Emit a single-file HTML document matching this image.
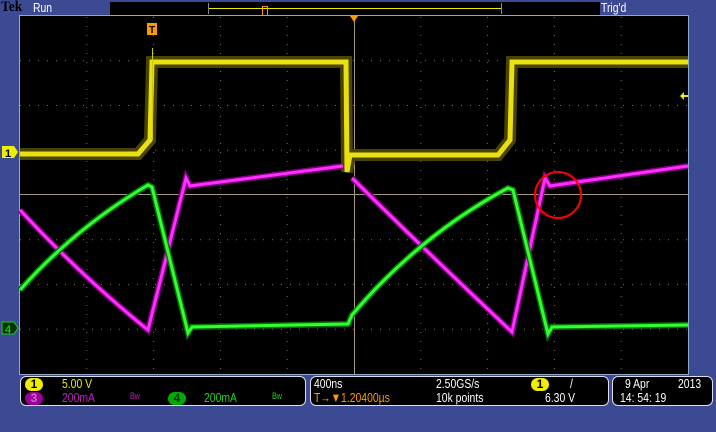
<!DOCTYPE html>
<html><head><meta charset="utf-8"><style>
body{margin:0;width:716px;height:432px;background:#3c4993;overflow:hidden;position:relative;font-family:"Liberation Sans",sans-serif}
.t{position:absolute;color:#fff;font-size:13px;white-space:nowrap;transform-origin:0 0;transform:scaleX(.8)}
.panel{position:absolute;background:#000;border:1px solid #dde;border-radius:6px}
.badge{position:absolute;width:18px;height:13px;border-radius:7px;font-size:12px;text-align:center;line-height:13px;font-weight:bold}
</style></head><body>
<div class="t" style="left:1px;top:-1px;font-family:'Liberation Serif',serif;font-weight:bold;font-size:15px;color:#000;transform:scaleX(.9)">Tek</div>
<div class="t" style="left:33px;top:0px">Run</div>
<div style="position:absolute;left:110px;top:2px;width:490px;height:13px;background:#000"></div>
<div style="position:absolute;left:208px;top:3px;width:292px;height:11px;border-left:1px solid #888;border-right:1px solid #888"></div>
<div style="position:absolute;left:209px;top:8px;width:292px;height:1px;background:#ee0"></div>
<div style="position:absolute;left:262px;top:6px;width:4px;height:8px;border:1px solid #f90"></div>
<div class="t" style="left:601px;top:0px">Trig'd</div>
<svg style="position:absolute;left:0;top:0" width="716" height="432">
<rect x="19.5" y="15.5" width="669" height="359" fill="#000" stroke="#8ac" stroke-width="1"/>
<g stroke="#7b7358" stroke-width="1" stroke-dasharray="1 8">
<line x1="86.8" y1="17" x2="86.8" y2="374"/><line x1="153.6" y1="17" x2="153.6" y2="374"/><line x1="220.4" y1="17" x2="220.4" y2="374"/><line x1="287.2" y1="17" x2="287.2" y2="374"/><line x1="420.8" y1="17" x2="420.8" y2="374"/><line x1="487.6" y1="17" x2="487.6" y2="374"/><line x1="554.4" y1="17" x2="554.4" y2="374"/><line x1="621.2" y1="17" x2="621.2" y2="374"/>
<line x1="20" y1="60.75" x2="688" y2="60.75"/><line x1="20" y1="105.5" x2="688" y2="105.5"/><line x1="20" y1="150.25" x2="688" y2="150.25"/><line x1="20" y1="239.75" x2="688" y2="239.75"/><line x1="20" y1="284.5" x2="688" y2="284.5"/><line x1="20" y1="329.25" x2="688" y2="329.25"/>
</g>
<line x1="354.5" y1="16" x2="354.5" y2="374" stroke="#a89878"/>
<line x1="20" y1="194.5" x2="688" y2="194.5" stroke="#a89878"/>
<!-- yellow -->
<g fill="none" stroke-linejoin="miter">
<path d="M20 154 L138 154 L150 140 L152 62 L346 62 L347 172 L350 155 L498 155 L510 140 L512 62 L688 62" stroke="#4a4400" stroke-width="12"/>
<path d="M20 154 L138 154 L150 140 L152 62 L346 62 L347 172 L350 155 L498 155 L510 140 L512 62 L688 62" stroke="#e8e010" stroke-width="5"/>
<line x1="152.5" y1="48" x2="152.5" y2="140" stroke="#cc0" stroke-width="1"/>
</g>
<!-- magenta -->
<path d="M20 210 Q80 275 148 330 L186 178 L190 186 L343 166 M352 178 Q430 255 512 332 L545 178 L550 186 L688 166" fill="none" stroke="#800080" stroke-width="6"/>
<path d="M20 210 Q80 275 148 330 L186 178 L190 186 L343 166 M352 178 Q430 255 512 332 L545 178 L550 186 L688 166" fill="none" stroke="#ff30ff" stroke-width="3"/>
<!-- green -->
<path d="M20 290 Q75 228 148 185 L152 187 L188 333 L192 327 L348 324 L352 315 Q420 235 508 188 L513 190 L548 334 L552 327 L688 325" fill="none" stroke="#087008" stroke-width="6"/>
<path d="M20 290 Q75 228 148 185 L152 187 L188 333 L192 327 L348 324 L352 315 Q420 235 508 188 L513 190 L548 334 L552 327 L688 325" fill="none" stroke="#30ff30" stroke-width="3"/>
<circle cx="558" cy="195" r="23" fill="none" stroke="#f00" stroke-width="2"/>
<path d="M350 16 L358 16 L354 22 Z" fill="#f90"/>
<rect x="147" y="23" width="10" height="12" fill="#f90"/><text x="149" y="33" font-size="10" font-weight="bold" fill="#000" font-family="Liberation Sans">T</text>
<path d="M2 146 L14 146 L18 152 L14 158 L2 158 Z" fill="#ee0"/><text x="5" y="157" font-size="11" font-weight="bold" fill="#000" font-family="Liberation Sans">1</text>
<path d="M2 322 L14 322 L18 328 L14 334 L2 334 Z" fill="#030" stroke="#2c2"/><text x="5" y="333" font-size="11" fill="#2e2" font-family="Liberation Sans">4</text>
<path d="M680 96 L684 92 L684 95 L688 95 L688 97 L684 97 L684 100 Z" fill="#ee0"/>
</svg>
<div class="panel" style="left:20px;top:376px;width:284px;height:28px"></div>
<div class="panel" style="left:310px;top:376px;width:297px;height:28px"></div>
<div class="panel" style="left:612px;top:376px;width:99px;height:28px"></div>
<div class="badge" style="left:25px;top:378px;background:#ee0;color:#000">1</div>
<div class="t" style="left:62px;top:376px;color:#ee0">5.00 V</div>
<div class="badge" style="left:25px;top:392px;background:#909;color:#c6c">3</div>
<div class="t" style="left:62px;top:390px;color:#b2b">200mA</div>
<div class="t" style="left:130px;top:391px;color:#b2b;font-size:9px">Bw</div>
<div class="badge" style="left:168px;top:392px;background:#0a0;color:#030">4</div>
<div class="t" style="left:204px;top:390px;color:#2c2">200mA</div>
<div class="t" style="left:272px;top:391px;color:#2c2;font-size:9px">Bw</div>
<div class="t" style="left:314px;top:376px">400ns</div>
<div class="t" style="left:436px;top:376px">2.50GS/s</div>
<div class="badge" style="left:531px;top:378px;background:#ee0;color:#000">1</div>
<div class="t" style="left:570px;top:376px">/</div>
<div class="t" style="left:314px;top:390px;color:#f90">T→▼1.20400µs</div>
<div class="t" style="left:436px;top:390px">10k points</div>
<div class="t" style="left:545px;top:390px">6.30 V</div>
<div class="t" style="left:625px;top:376px">9 Apr</div>
<div class="t" style="left:678px;top:376px">2013</div>
<div class="t" style="left:620px;top:390px">14: 54: 19</div>
</body></html>
